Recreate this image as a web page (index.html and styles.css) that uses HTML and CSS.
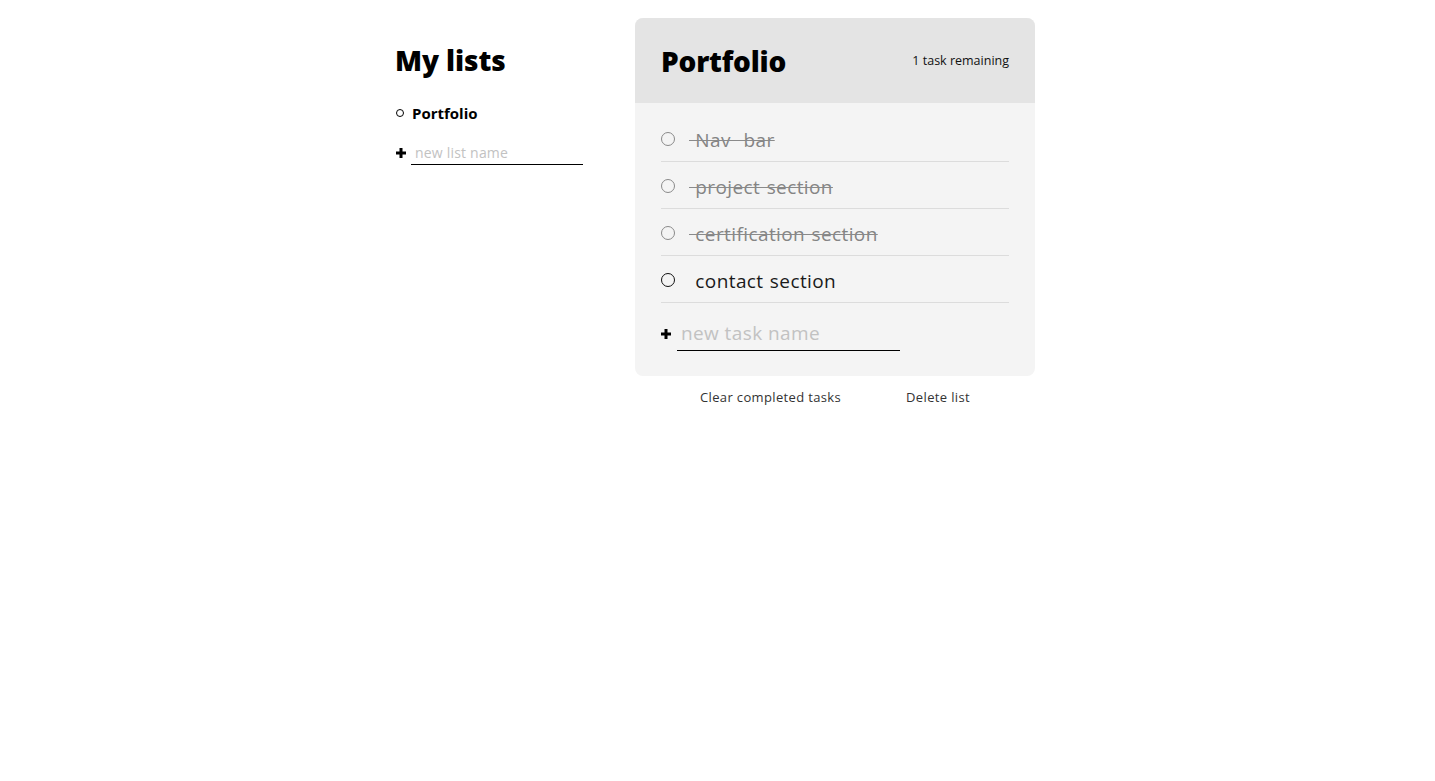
FILE: index.html
```html
<!DOCTYPE html>
<html lang="en">
<head>
<meta charset="utf-8">
<title>Todo</title>
<link rel="stylesheet" href="styles.css">
</head>
<body>
<div class="app">
  <aside class="all-lists">
    <h2 class="lists-title">My lists</h2>
    <ul class="list-items">
      <li class="list-name">Portfolio</li>
    </ul>
    <form class="new-form new-list" action="">
      <svg class="plus plus-small" width="10" height="10" viewBox="0 0 10 10"><rect x="3.5" y="0" width="3" height="10" fill="#000"/><rect x="0" y="3.5" width="10" height="3" fill="#000"/></svg>
      <input class="new-input new-list-input" type="text" placeholder="new list name">
    </form>
  </aside>
  <main class="active-list">
    <section class="card">
      <header class="card-header">
        <h2 class="card-title">Portfolio</h2>
        <p class="task-count">1 task remaining</p>
      </header>
      <div class="card-body">
        <div class="task done"><span class="check"></span><span class="task-label">&nbsp;Nav&nbsp; bar</span></div>
        <div class="task done"><span class="check"></span><span class="task-label">&nbsp;project section</span></div>
        <div class="task done"><span class="check"></span><span class="task-label">&nbsp;certification section</span></div>
        <div class="task"><span class="check"></span><span class="task-label">&nbsp;contact section</span></div>
        <form class="new-form new-task" action="">
          <svg class="plus" width="10" height="10" viewBox="0 0 10 10"><rect x="3.5" y="0" width="3" height="10" fill="#000"/><rect x="0" y="3.5" width="10" height="3" fill="#000"/></svg>
          <input class="new-input new-task-input" type="text" placeholder="new task name">
        </form>
      </div>
    </section>
    <div class="delete-stuff">
      <button class="btn-link">Clear completed tasks</button>
      <button class="btn-link">Delete list</button>
    </div>
  </main>
</div>
</body>
</html>
```
FILE: styles.css
```css
* { box-sizing: border-box; }
body {
  margin: 0;
  background: #fff;
  color: #000;
  font-family: "Open Sans", "Liberation Sans", sans-serif;
}
.app {
  display: flex;
  width: 645px;
  margin: 0 auto;
  padding: 18px 5px 0 0;
}
.all-lists {
  width: 240px;
  flex: none;
}
.lists-title {
  margin: 24px 0 0;
  font-size: 28px;
  font-weight: 800;
  line-height: 36px;
  letter-spacing: -0.1px;
}
.list-items {
  list-style: none;
  margin: 24px 0 0;
  padding: 0;
}
.list-name {
  display: flex;
  align-items: center;
  font-size: 15px;
  font-weight: 700;
  line-height: 22px;
}
.list-name::before {
  content: "";
  width: 6px;
  height: 6px;
  border: 1.3px solid #000;
  border-radius: 50%;
  margin: 0 8px 0 1px;
}
.new-form {
  display: flex;
  align-items: center;
  margin: 0;
}
.new-list {
  margin-top: 17px;
}
.plus { flex: none; }
.new-input {
  background: transparent;
  border: 0;
  border-bottom: 1px solid #000;
  outline: none;
  font-family: inherit;
  color: #000;
  padding: 0 4px;
}
.new-input::placeholder { color: #c2c2c2; }
.plus-small { margin-left: 1px; }
.new-list-input {
  margin-left: 5px;
  width: 172px;
  height: 24px;
  font-size: 14px;
  letter-spacing: 0.2px;
}
.active-list {
  width: 400px;
  flex: none;
}
.card {
  border-radius: 8px;
  overflow: hidden;
  background: #f4f4f4;
}
.card-header {
  height: 85px;
  background: #e4e4e4;
  display: flex;
  align-items: center;
  justify-content: space-between;
  padding: 0 26px;
}
.card-title {
  margin: 0;
  font-size: 28px;
  font-weight: 800;
  line-height: 36px;
  letter-spacing: -0.2px;
}
.task-count {
  margin: 0;
  font-size: 12.5px;
  color: #111;
}
.card-body {
  padding: 12px 26px 25px;
}
.task {
  display: flex;
  align-items: center;
  height: 47px;
  padding-top: 4px;
  border-bottom: 1px solid #dcdcdc;
  font-size: 19px;
  letter-spacing: 0.4px;
  color: #1a1a1a;
}
.check {
  flex: none;
  width: 14px;
  height: 14px;
  border: 1.5px solid #111;
  border-radius: 50%;
  margin-right: 14px;
  position: relative;
  top: -1px;
}
.task-label {
  word-spacing: 1px;
}
.task.done { color: #848484; }
.task.done .check { border-color: #8a8a8a; }
.task.done .task-label {
  text-decoration: line-through;
  text-decoration-thickness: 1.3px;
  text-decoration-color: #8a8a8a;
}
.new-task {
  padding-top: 13px;
}
.new-task-input {
  margin-left: 6px;
  width: 223px;
  height: 35px;
  font-size: 19px;
  letter-spacing: 0.4px;
}
.delete-stuff {
  display: flex;
  justify-content: space-evenly;
  margin-top: 12px;
}
.btn-link {
  background: none;
  border: 0;
  padding: 0;
  font-family: inherit;
  font-size: 13px;
  letter-spacing: 0.35px;
  color: #333;
  cursor: pointer;
}
```
